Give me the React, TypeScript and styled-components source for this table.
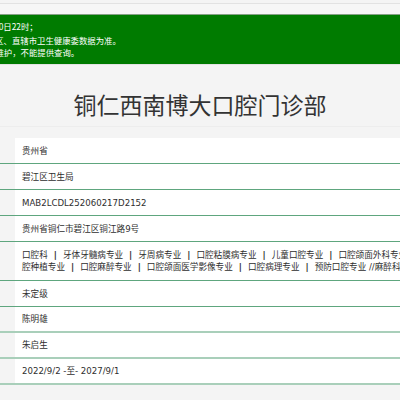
import React from "react";
import styled, { createGlobalStyle } from "styled-components";

const Global = createGlobalStyle`
  html, body { margin: 0; padding: 0; }
  body {
    width: 400px;
    height: 400px;
    overflow: hidden;
    background: #f4f4f4;
    font-family: "DejaVu Sans", "Noto Sans CJK SC", sans-serif;
    color: #333;
  }
`;

const Page = styled.div`
  width: 400px;
  display: flex;
  flex-direction: column;
`;

const TopBar = styled.div`
  margin-top: 3px;
  height: 10px;
  background: #f6f6f6;
  border-top: 1px solid #e2e2e2;
  border-bottom: 1px solid #86a086;
`;

const Notice = styled.div`
  height: 50px;
  box-sizing: border-box;
  padding-top: 6px;
  background: #007b00;
  color: #fff;
  font-family: "Noto Sans CJK SC", sans-serif;
  font-size: 8.4px;
  overflow: hidden;
  border-bottom: 1px solid #e3e3e3;
`;

const NoticeLine = styled.div<{ $shift: number; $gap?: number }>`
  margin-left: ${(p) => p.$shift}px;
  line-height: 11.4px;
  margin-bottom: ${(p) => p.$gap ?? 0}px;
  white-space: nowrap;
`;

const TitleBar = styled.div`
  height: 62px;
  box-sizing: border-box;
  padding-top: 24px;
  border-bottom: 1px solid #ededed;
  text-align: center;
`;

const Title = styled.h1`
  margin: 0;
  font-family: "Noto Sans CJK SC", sans-serif;
  font-weight: 400;
  font-size: 23px;
  line-height: 30px;
  color: #333;
`;

const Table = styled.div`
  margin-top: 11px;
  display: flex;
  flex-direction: column;
`;

const Row = styled.div<{ $h: number; $soft?: boolean }>`
  display: grid;
  grid-template-columns: 15px 1fr;
  height: ${(p) => p.$h}px;
  box-sizing: border-box;
  border-bottom: ${(p) => (p.$soft ? "2px solid #a9cfba" : "1px solid #5ea67e")};
`;

const Label = styled.div`
  background: #f4f4f4;
`;

const Value = styled.div`
  background: #fff;
  display: flex;
  flex-direction: column;
  justify-content: center;
  padding-left: 7px;
  font-size: 8.6px;
  line-height: 12px;
  color: #2e2e2e;
  white-space: nowrap;
  overflow: hidden;
`;

const Bar = styled.b`
  font-weight: 700;
  margin: 0 6px;
`;

const specialties1 = ["口腔科", "牙体牙髓病专业", "牙周病专业", "口腔粘膜病专业", "儿童口腔专业", "口腔颌面外科专业口"];
const specialties2 = ["腔种植专业", "口腔麻醉专业", "口腔颌面医学影像专业", "口腔病理专业", "预防口腔专业 //麻醉科"];

const Joined: React.FC<{ items: string[] }> = ({ items }) => (
  <span>
    {items.map((t, i) => (
      <React.Fragment key={i}>
        {i > 0 && <Bar>|</Bar>}
        {t}
      </React.Fragment>
    ))}
  </span>
);

const rows: { h: number; soft?: boolean; content: React.ReactNode }[] = [
  { h: 26, content: "贵州省" },
  { h: 26, content: "碧江区卫生局" },
  { h: 26, content: "MAB2LCDL252060217D2152" },
  { h: 26, content: "贵州省铜仁市碧江区铜江路9号" },
  {
    h: 39,
    content: (
      <>
        <Joined items={specialties1} />
        <Joined items={specialties2} />
      </>
    ),
  },
  { h: 26, content: "未定级" },
  { h: 26, soft: true, content: "陈明雄" },
  { h: 26, soft: true, content: "朱启生" },
  { h: 26, soft: true, content: "2022/9/2 -至- 2027/9/1" },
];

export default function App() {
  return (
    <Page>
      <Global />
      <TopBar />
      <Notice>
        <NoticeLine $shift={-6} $gap={3}>10日22时；</NoticeLine>
        <NoticeLine $shift={-4.8}>区、直辖市卫生健康委数据为准。</NoticeLine>
        <NoticeLine $shift={-4.5}>维护，不能提供查询。</NoticeLine>
      </Notice>
      <TitleBar>
        <Title>铜仁西南博大口腔门诊部</Title>
      </TitleBar>
      <Table>
        {rows.map((r, i) => (
          <Row key={i} $h={r.h} $soft={r.soft}>
            <Label />
            <Value>{r.content}</Value>
          </Row>
        ))}
      </Table>
    </Page>
  );
}
